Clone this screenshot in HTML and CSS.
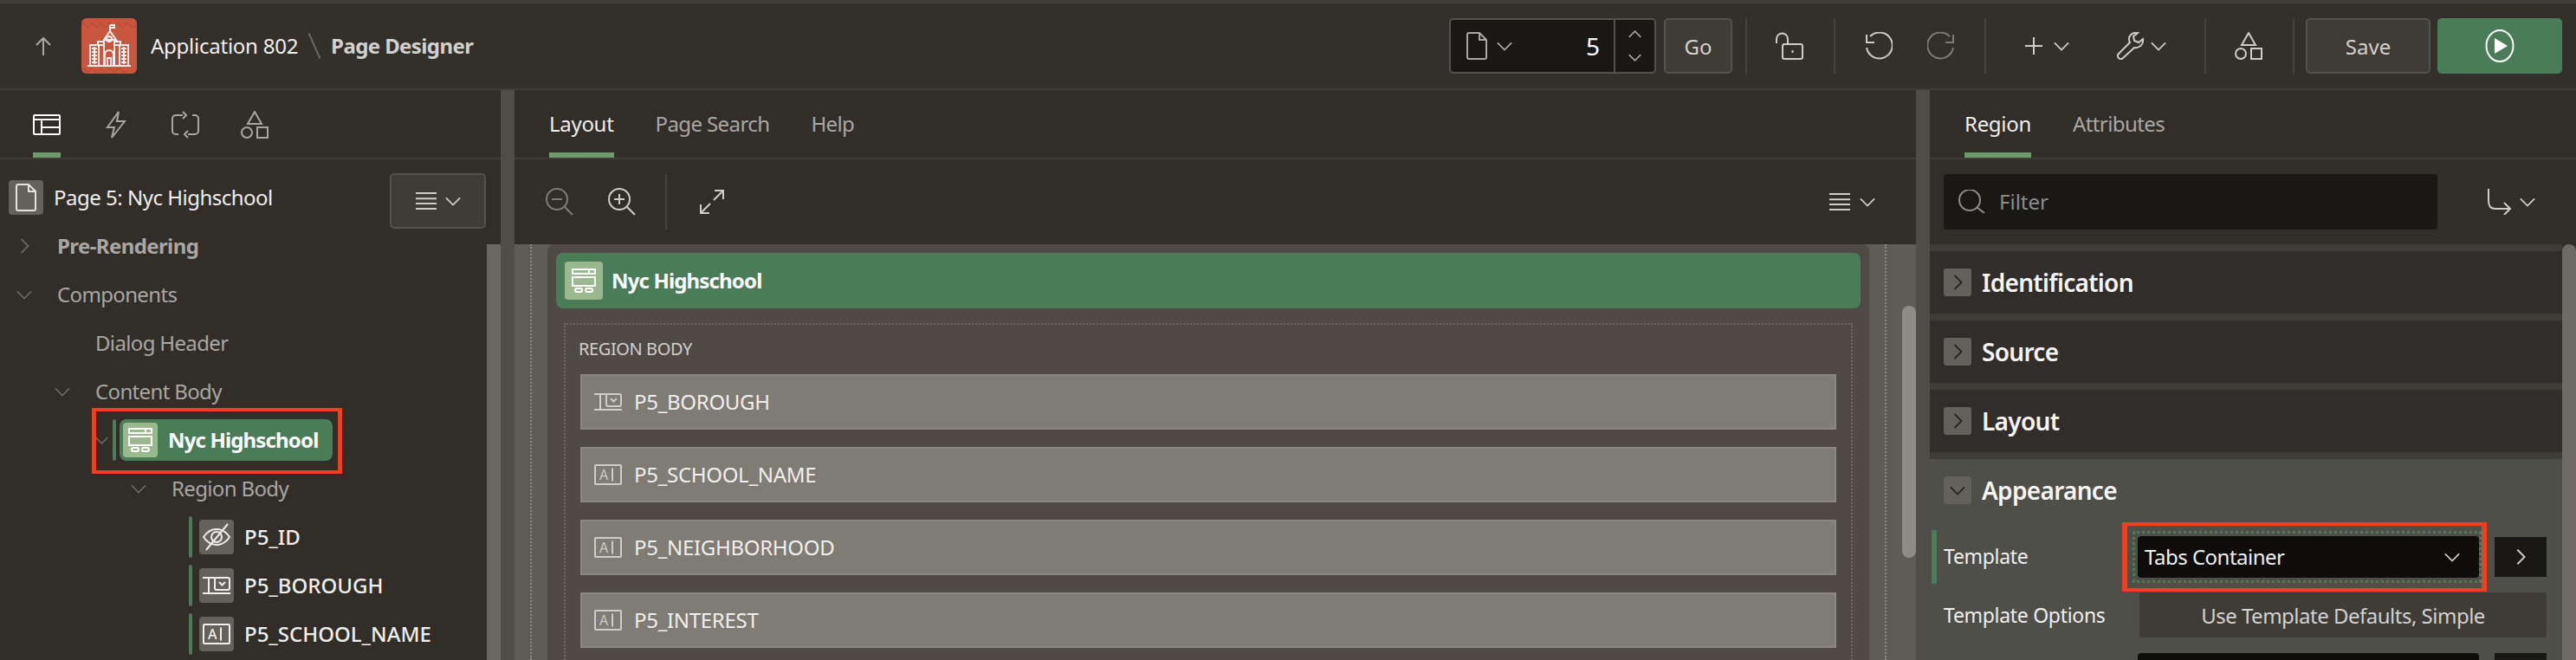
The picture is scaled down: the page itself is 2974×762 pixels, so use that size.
FILE: index.html
```html
<!DOCTYPE html>
<html lang="en">
<head>
    <meta charset="UTF-8">
    <meta name="viewport" content="width=device-width, initial-scale=1.0">
    <title>Page Designer</title>
    <link rel="stylesheet" href="styles.css">
</head>
<body>
    <svg class="sprite" xmlns="http://www.w3.org/2000/svg">
        <symbol id="i-down" viewBox="0 0 20 12"><polyline points="1,1.5 10,10.5 19,1.5"/></symbol>
        <symbol id="i-up" viewBox="0 0 20 12"><polyline points="1,10.5 10,1.5 19,10.5"/></symbol>
        <symbol id="i-right" viewBox="0 0 12 20"><polyline points="1.5,1 10.5,10 1.5,19"/></symbol>
        <symbol id="i-arrow-up" viewBox="0 0 18 22"><path d="M9 22V2M1 10l8-8 8 8"/></symbol>
        <symbol id="i-doc" viewBox="0 0 24 32"><path d="M1 3a2 2 0 0 1 2-2h12l8 8v20a2 2 0 0 1-2 2H3a2 2 0 0 1-2-2zM15 1v8h8"/></symbol>
        <symbol id="i-menu" viewBox="0 0 24 20"><path d="M0 1h24M0 7.300h24M0 13h24M0 19h24"/></symbol>
        <symbol id="i-lock" viewBox="0 0 32 32"><path d="M1 13V8a6.500 6.500 0 0 1 13 0v5"/><rect x="8" y="14" width="23" height="17" rx="2"/><path d="M19.500 21v3"/></symbol>
        <symbol id="i-undo" viewBox="0 0 32 32"><path d="M6 5a15 15 0 1 1-4 13"/><path d="M2 3v9h9"/></symbol>
        <symbol id="i-redo" viewBox="0 0 32 32"><path d="M26 5a15 15 0 1 0 4 13"/><path d="M30 3v9h-9"/></symbol>
        <symbol id="i-plus" viewBox="0 0 20 20"><path d="M10 0v20M0 10h20"/></symbol>
        <symbol id="i-wrench" viewBox="0 0 32 32"><path d="M30 8l-5 4-5-2-1-5 5-4c-5-1-10 2-10 7 0 2 0 3 1 4L2 25c-2 2-1 4 0 5s3 2 5 0l13-12c6 1 11-4 10-10z"/><path d="M5 27h.1"/></symbol>
        <symbol id="i-shapes" viewBox="0 0 32 32"><path d="M16 1l8 14H8z"/><circle cx="7" cy="25" r="6"/><rect x="19" y="19" width="12" height="12"/></symbol>
        <symbol id="i-play" viewBox="0 0 34 38"><ellipse cx="17" cy="19" rx="15.500" ry="18"/><path class="solid" d="M11 10l15 9-15 9z"/></symbol>
        <symbol id="i-tree" viewBox="0 0 32 24"><rect x="1" y="1" width="30" height="22" rx="1"/><path d="M1 6h30M10 6v17M10 15h21"/></symbol>
        <symbol id="i-bolt" viewBox="0 0 24 32"><path d="M15 1L2 19h8l-3 12 15-19h-9z"/></symbol>
        <symbol id="i-loop" viewBox="0 0 32 32"><path d="M13 5H5a4 4 0 0 0-4 4v14a4 4 0 0 0 4 4h3M13 1l4 4-4 4M19 27h8a4 4 0 0 0 4-4V9a4 4 0 0 0-4-4h-3M19 23l-4 4 4 4"/></symbol>
        <symbol id="i-region" viewBox="0 0 28 28"><rect x="1" y="1" width="26" height="5"/><path d="M20 1v5"/><rect x="1" y="10" width="26" height="10"/><rect x="4" y="23" width="8" height="4" rx="2"/><rect x="16" y="23" width="8" height="4" rx="2"/></symbol>
        <symbol id="i-hidden" viewBox="0 0 32 32"><path d="M1 16c4-6 9-9 15-9s11 3 15 9c-4 6-9 9-15 9S5 22 1 16z"/><circle cx="16" cy="16" r="6"/><path d="M4 31L29 1"/></symbol>
        <symbol id="i-select" viewBox="0 0 32 20"><path d="M0 1h14M0 19h32M7 1v18"/><rect x="14" y="1" width="17" height="14" rx="2"/><polyline points="19,6 22.500,9.500 26,6"/></symbol>
        <symbol id="i-zoom-out" viewBox="0 0 32 32"><circle cx="13" cy="13" r="12"/><path d="M22 22l9 9M7 13h12"/></symbol>
        <symbol id="i-zoom-in" viewBox="0 0 32 32"><circle cx="13" cy="13" r="12"/><path d="M22 22l9 9M7 13h12M13 7v12"/></symbol>
        <symbol id="i-expand" viewBox="0 0 28 28"><path d="M16 12L27 1M17 1h10v10M12 16L1 27M1 17v10h10"/></symbol>
        <symbol id="i-search" viewBox="0 0 32 28"><circle cx="14" cy="12" r="12"/><path d="M22 20l9 7"/></symbol>
        <symbol id="i-goto" viewBox="0 0 28 30"><path d="M1 0v14c0 6 3 9 8 9h17M19 16l7 7-7 7"/></symbol>
        <symbol id="i-school" viewBox="0 0 64 64">
            <path d="M7 55h50M10 55V31h16M54 55V31H38M19 31v-4h7M45 31v-4h-7"/>
            <path d="M20 55V31M44 55V31M26 55V25L33 15l7 10h-2v30M26 25h12"/>
            <path d="M33 15V8M33 8h5v3h-5"/>
            <circle cx="32" cy="24" r="3"/>
            <path d="M27 55V42a5 5 0 0 1 10 0v13M30 55v-9h4v9"/>
            <path d="M12 35h6M12 39h6M12 43h6M12 47h6M12 51h6M46 35h6M46 39h6M46 43h6M46 47h6M46 51h6M15 33v20M49 33v20"/>
        </symbol>
    </svg>

    <header class="topbar">
        <div class="crumbs">
            <svg class="ic ic-back"><use href="#i-arrow-up"/></svg>
            <div class="logo">
                <svg class="logo-waves" viewBox="0 0 64 64"><path d="M0 8c4-8 6 8 10 0s6 8 10 0 6 8 10 0 6 8 10 0 6 8 10 0 6 8 14 0M0 60c4-8 6 8 10 0s6 8 10 0 6 8 10 0 6 8 10 0 6 8 14 0"/></svg>
                <svg class="logo-school"><use href="#i-school"/></svg>
            </div>
            <span class="app-name">Application 802</span>
            <span class="crumb-sep"></span>
            <span class="page-name">Page Designer</span>
        </div>
        <div class="tools">
            <div class="page-picker">
                <svg class="ic ic-doc dim"><use href="#i-doc"/></svg>
                <svg class="ic chev dim"><use href="#i-down"/></svg>
                <span class="page-num">5</span>
                <div class="spin">
                    <svg class="ic chev dim"><use href="#i-up"/></svg>
                    <svg class="ic chev dim"><use href="#i-down"/></svg>
                </div>
            </div>
            <button class="btn btn-go">Go</button>
            <span class="vline vline-go"></span>
            <div class="tool-group tg-lock"><svg class="ic ic-32"><use href="#i-lock"/></svg></div>
            <span class="vline"></span>
            <div class="tool-group tg-undo">
                <svg class="ic ic-32"><use href="#i-undo"/></svg>
                <svg class="ic ic-32 off"><use href="#i-redo"/></svg>
            </div>
            <span class="vline"></span>
            <div class="tool-group tg-create">
                <div class="menu-btn"><svg class="ic ic-plus"><use href="#i-plus"/></svg><svg class="ic chev"><use href="#i-down"/></svg></div>
                <div class="menu-btn menu-btn-tight"><svg class="ic ic-32"><use href="#i-wrench"/></svg><svg class="ic chev"><use href="#i-down"/></svg></div>
            </div>
            <span class="vline"></span>
            <div class="tool-group tg-lock"><svg class="ic ic-32"><use href="#i-shapes"/></svg></div>
            <span class="vline"></span>
            <button class="btn btn-save">Save</button>
            <button class="btn btn-run"><svg class="ic ic-play"><use href="#i-play"/></svg></button>
        </div>
    </header>

    <main class="panels">
        <section class="panel panel-left">
            <div class="tabbar icon-tabs">
                <div class="icon-tab active"><svg class="ic ic-tree"><use href="#i-tree"/></svg></div>
                <div class="icon-tab"><svg class="ic ic-bolt"><use href="#i-bolt"/></svg></div>
                <div class="icon-tab"><svg class="ic ic-32"><use href="#i-loop"/></svg></div>
                <div class="icon-tab"><svg class="ic ic-32"><use href="#i-shapes"/></svg></div>
            </div>
            <div class="tree-wrap">
                <div class="tree">
                    <div class="row row-page">
                        <span class="node-icon"><svg class="ic ic-doc-sm"><use href="#i-doc"/></svg></span>
                        <span class="page-title txt">Page 5: Nyc Highschool</span>
                        <button class="btn btn-tree-menu">
                            <svg class="ic ic-menu"><use href="#i-menu"/></svg>
                            <svg class="ic chev"><use href="#i-down"/></svg>
                        </button>
                    </div>
                    <div class="row lvl-0"><svg class="ic tw tw-right"><use href="#i-right"/></svg><b class="strong-muted txt">Pre-Rendering</b></div>
                    <div class="row lvl-0"><svg class="ic tw"><use href="#i-down"/></svg><span class="muted txt">Components</span></div>
                    <div class="row lvl-1 no-tw"><span class="muted txt">Dialog Header</span></div>
                    <div class="row lvl-1"><svg class="ic tw"><use href="#i-down"/></svg><span class="muted txt">Content Body</span></div>
                    <div class="row row-selected">
                        <svg class="ic tw tw-small"><use href="#i-down"/></svg>
                        <span class="node-bar"></span>
                        <span class="pill">
                            <span class="node-icon node-icon-green"><svg class="ic ic-region"><use href="#i-region"/></svg></span>
                            <span class="txt">Nyc Highschool</span>
                        </span>
                        <span class="callout callout-tree"></span>
                    </div>
                    <div class="row lvl-2"><svg class="ic tw"><use href="#i-down"/></svg><span class="muted txt">Region Body</span></div>
                    <div class="row row-item">
                        <span class="node-bar"></span>
                        <span class="node-icon"><svg class="ic ic-item-32"><use href="#i-hidden"/></svg></span>
                        <span class="txt">P5_ID</span>
                    </div>
                    <div class="row row-item">
                        <span class="node-bar"></span>
                        <span class="node-icon"><svg class="ic ic-item"><use href="#i-select"/></svg></span>
                        <span class="txt">P5_BOROUGH</span>
                    </div>
                    <div class="row row-item">
                        <span class="node-bar"></span>
                        <span class="node-icon">
                            <svg class="ic ic-text" viewBox="0 0 32 24"><rect x="1" y="1" width="30" height="22" rx="1"/><text class="solid icon-letter" x="6" y="18" font-size="16">A</text><path d="M21 4.500v15"/></svg>
                        </span>
                        <span class="txt">P5_SCHOOL_NAME</span>
                    </div>
                </div>
                <div class="tree-scroll"><div class="tree-thumb"></div></div>
            </div>
        </section>

        <div class="splitter"></div>

        <section class="panel panel-center">
            <div class="tabbar text-tabs">
                <span class="tab active">Layout</span>
                <span class="tab">Page Search</span>
                <span class="tab">Help</span>
            </div>
            <div class="layout-tools">
                <svg class="ic ic-32 off"><use href="#i-zoom-out"/></svg>
                <svg class="ic ic-32 zoom-in"><use href="#i-zoom-in"/></svg>
                <span class="vline vline-zoom"></span>
                <svg class="ic ic-expand"><use href="#i-expand"/></svg>
                <div class="menu-btn layout-menu">
                    <svg class="ic ic-menu"><use href="#i-menu"/></svg>
                    <svg class="ic chev"><use href="#i-down"/></svg>
                </div>
            </div>
            <div class="canvas">
                <div class="gutter"><span class="gutter-line"></span></div>
                <div class="region">
                    <div class="region-head">
                        <span class="node-icon node-icon-head"><svg class="ic ic-region"><use href="#i-region"/></svg></span>
                        <span class="txt">Nyc Highschool</span>
                    </div>
                    <div class="region-body">
                        <div class="region-label"><span class="txt">REGION BODY</span></div>
                        <div class="field"><svg class="ic ic-field"><use href="#i-select"/></svg><span class="txt">P5_BOROUGH</span></div>
                        <div class="field">
                            <svg class="ic ic-field-text" viewBox="0 0 32 24"><rect x="1" y="1" width="30" height="22" rx="1"/><text class="solid icon-letter" x="6" y="18" font-size="16">A</text><path d="M21 4.500v15"/></svg>
                            <span class="txt">P5_SCHOOL_NAME</span>
                        </div>
                        <div class="field">
                            <svg class="ic ic-field-text" viewBox="0 0 32 24"><rect x="1" y="1" width="30" height="22" rx="1"/><text class="solid icon-letter" x="6" y="18" font-size="16">A</text><path d="M21 4.500v15"/></svg>
                            <span class="txt">P5_NEIGHBORHOOD</span>
                        </div>
                        <div class="field">
                            <svg class="ic ic-field-text" viewBox="0 0 32 24"><rect x="1" y="1" width="30" height="22" rx="1"/><text class="solid icon-letter" x="6" y="18" font-size="16">A</text><path d="M21 4.500v15"/></svg>
                            <span class="txt">P5_INTEREST</span>
                        </div>
                    </div>
                </div>
                <div class="gutter"><span class="gutter-line"></span></div>
                <div class="canvas-scroll"><div class="canvas-thumb"></div></div>
            </div>
        </section>

        <div class="splitter"></div>

        <section class="panel panel-right">
            <div class="tabbar text-tabs text-tabs-right">
                <span class="tab active">Region</span>
                <span class="tab">Attributes</span>
            </div>
            <div class="filter-bar">
                <div class="filter">
                    <svg class="ic ic-search"><use href="#i-search"/></svg>
                    <span class="txt">Filter</span>
                </div>
                <div class="menu-btn goto">
                    <svg class="ic ic-goto"><use href="#i-goto"/></svg>
                    <svg class="ic chev"><use href="#i-down"/></svg>
                </div>
            </div>
            <div class="props-wrap">
                <div class="props">
                    <div class="group"><span class="toggle"><svg class="ic tg-chev-r"><use href="#i-right"/></svg></span><h2>Identification</h2></div>
                    <div class="group"><span class="toggle"><svg class="ic tg-chev-r"><use href="#i-right"/></svg></span><h2>Source</h2></div>
                    <div class="group"><span class="toggle"><svg class="ic tg-chev-r"><use href="#i-right"/></svg></span><h2>Layout</h2></div>
                    <div class="group-open">
                        <div class="group group-bare"><span class="toggle"><svg class="ic tg-chev-d"><use href="#i-down"/></svg></span><h2>Appearance</h2></div>
                        <div class="prop prop-template">
                            <span class="prop-bar"></span>
                            <label class="txt">Template</label>
                            <div class="select">
                                <span class="txt">Tabs Container</span>
                                <svg class="ic chev"><use href="#i-down"/></svg>
                                <span class="dots"></span>
                                <span class="callout callout-select"></span>
                            </div>
                            <span class="go-btn"><svg class="ic go-chev"><use href="#i-right"/></svg></span>
                        </div>
                        <div class="prop prop-options">
                            <span class="prop-bar prop-bar-none"></span>
                            <label>Template Options</label>
                            <div class="options-btn">Use Template Defaults, Simple</div>
                        </div>
                        <div class="prop prop-next">
                            <span class="prop-bar prop-bar-none"></span>
                            <label></label>
                            <div class="select"></div>
                            <span class="go-btn"></span>
                        </div>
                    </div>
                </div>
                <div class="props-scroll"><div class="props-thumb"></div></div>
            </div>
        </section>
    </main>
</body>
</html>
```

FILE: styles.css
```css
* {
    box-sizing: border-box;
}
html, body {
    margin: 0;
    padding: 0;
    height: 100%;
    overflow: hidden;
}
body {
    width: 2974px;
    height: 762px;
    display: flex;
    flex-direction: column;
    background-color: #312e2a;
    color: #f1efed;
    font-family: "Noto Sans", "Open Sans", sans-serif;
    font-size: 24px;
}
.sprite {
    position: absolute;
    width: 0;
    height: 0;
}
symbol, .ic {
    fill: none;
    stroke: currentColor;
    stroke-width: 2;
}
.solid {
    fill: currentColor;
    stroke: none;
}
.icon-letter {
    font-family: "Noto Sans", sans-serif;
}
.txt {
    margin-bottom: 2px;
}
.ic {
    display: block;
    flex: none;
    color: #cfcdc9;
}
.ic-32 {
    width: 32px;
    height: 32px;
}
.off {
    color: #7f7c77;
}
.dim {
    color: #a9a7a3;
}
.chev {
    width: 18px;
    height: 11px;
    stroke-width: 2;
}
button {
    font-family: inherit;
}

/* top bar */
.topbar {
    height: 104px;
    flex: none;
    display: flex;
    align-items: center;
    justify-content: space-between;
    background-color: #33302c;
    border-top: 4px solid #413e3a;
    border-bottom: 2px solid #3f3c38;
}
.crumbs {
    display: flex;
    align-items: center;
}
.ic-back {
    width: 18px;
    height: 22px;
    margin-left: 41px;
    color: #a9a7a3;
}
.logo {
    position: relative;
    width: 64px;
    height: 64px;
    margin-left: 35px;
    border-radius: 6px;
    background-color: #c9573f;
    overflow: hidden;
}
.logo-waves {
    position: absolute;
    left: 0;
    top: 0;
    width: 64px;
    height: 64px;
    fill: none;
    stroke: #bb4c36;
    stroke-width: 1.500;
}
.logo-school {
    position: absolute;
    left: 0;
    top: 0;
    width: 64px;
    height: 64px;
    fill: none;
    stroke: #fff;
    stroke-width: 1.600;
}
.app-name {
    margin-left: 16px;
    margin-bottom: 2px;
    letter-spacing: -0.25px;
}
.crumb-sep {
    width: 2px;
    height: 32px;
    margin: 0 18px 0 18px;
    background-color: #6b6864;
    transform: rotate(-24deg);
}
.page-name {
    color: #d3d1ce;
    font-weight: 700;
    margin-bottom: 2px;
    letter-spacing: -0.6px;
}
.tools {
    display: flex;
    align-items: center;
    padding-right: 16px;
}
.page-picker {
    width: 239px;
    height: 64px;
    display: flex;
    align-items: center;
    background-color: #191816;
    border: 2px solid #55514c;
    border-radius: 5px;
}
.ic-doc {
    width: 24px;
    height: 32px;
    margin-left: 18px;
}
.page-picker .chev {
    margin-left: 11px;
}
.page-num {
    margin-left: auto;
    margin-right: 16px;
    font-size: 28px;
    color: #fff;
}
.spin {
    width: 47px;
    height: 100%;
    display: flex;
    flex-direction: column;
    align-items: center;
    justify-content: space-between;
    padding: 12px 0;
    border-left: 2px solid #55514c;
}
.spin .chev {
    margin: 0;
    width: 15px;
    height: 9px;
}
.btn {
    height: 64px;
    border: 2px solid #55514c;
    border-radius: 5px;
    background-color: #3f3c38;
    color: #d3d1ce;
    font-size: 24px;
    padding: 0;
}
.btn-go {
    width: 79px;
    margin-left: 9px;
}
.vline {
    width: 2px;
    height: 64px;
    flex: none;
    background-color: #45423d;
}
.vline-go {
    margin-left: 15px;
}
.tool-group {
    display: flex;
    align-items: center;
    justify-content: center;
}
.tg-lock {
    width: 100px;
}
.tg-lock .ic {
    margin-right: 3px;
}
.tg-undo {
    width: 172px;
    gap: 40px;
}
.tg-create {
    width: 252px;
    gap: 55px;
}
.menu-btn {
    display: flex;
    align-items: center;
    gap: 13px;
}
.menu-btn-tight {
    gap: 7px;
}
.ic-plus {
    width: 20px;
    height: 20px;
}
.btn-save {
    width: 144px;
    margin-left: 13px;
}
.btn-run {
    width: 144px;
    margin-left: 8px;
    background-color: #4a7d57;
    border: none;
    display: flex;
    align-items: center;
    justify-content: center;
}
.ic-play {
    width: 34px;
    height: 38px;
    color: #fff;
}

/* panels */
.panels {
    flex: 1;
    display: flex;
    min-height: 0;
}
.panel {
    display: flex;
    flex-direction: column;
    min-width: 0;
}
.panel-left {
    width: 578px;
}
.panel-center {
    width: 1618px;
}
.panel-right {
    width: 746px;
}
.splitter {
    width: 16px;
    flex: none;
    background-color: #504c47;
}
.tabbar {
    height: 80px;
    flex: none;
    display: flex;
    border-bottom: 2px solid #3f3c38;
}
.icon-tabs {
    padding-left: 38px;
    gap: 48px;
}
.icon-tab {
    width: 32px;
    padding-top: 24px;
    color: #a9a7a3;
}
.icon-tab .ic {
    color: #a9a7a3;
}
.icon-tab.active {
    border-bottom: 6px solid #6f9a6c;
}
.icon-tab.active .ic {
    color: #fff;
}
.ic-tree {
    width: 32px;
    height: 24px;
    margin-top: 4px;
}
.ic-bolt {
    width: 24px;
    height: 32px;
    margin-left: 4px;
}
.text-tabs {
    padding-left: 40px;
    gap: 48px;
}
.tab {
    height: 78px;
    padding-top: 22px;
    color: #a9a7a3;
    letter-spacing: -0.6px;
}
.tab.active {
    color: #f1efed;
    letter-spacing: -0.3px;
    border-bottom: 6px solid #6f9a6c;
}

/* tree */
.tree-wrap {
    flex: 1;
    display: flex;
    min-height: 0;
}
.tree {
    width: 562px;
    padding-top: 16px;
    overflow: hidden;
}
.tree-scroll {
    width: 16px;
    padding-top: 98px;
}
.tree-thumb {
    height: 100%;
    background-color: #6b6864;
}
.row {
    position: relative;
    height: 56px;
    display: flex;
    align-items: center;
    white-space: nowrap;
}
.muted {
    color: #a9a7a3;
    letter-spacing: -0.65px;
}
.strong-muted {
    color: #a9a7a3;
    font-weight: 700;
    letter-spacing: -0.6px;
}
.row-page {
    padding-left: 10px;
}
.page-title {
    margin-left: 12px;
    letter-spacing: -0.5px;
}
.node-icon {
    width: 40px;
    height: 40px;
    flex: none;
    display: flex;
    align-items: center;
    justify-content: center;
    background-color: #64605b;
    border-radius: 4px;
}
.ic-doc-sm {
    width: 24px;
    height: 32px;
    color: #e4e2df;
}
.btn-tree-menu {
    width: 111px;
    margin-left: auto;
    margin-right: 1px;
    align-self: flex-start;
    display: flex;
    align-items: center;
    justify-content: center;
    gap: 10px;
}
.ic-menu {
    width: 24px;
    height: 20px;
}
.tw {
    width: 18px;
    height: 11px;
    color: #6b6864;
    margin-right: 29px;
}
.tw-right {
    width: 11px;
    height: 18px;
    margin-left: 4px;
    margin-right: 32px;
}
.lvl-0 {
    padding-left: 19px;
}
.lvl-1 {
    padding-left: 63px;
}
.no-tw {
    padding-left: 110px;
}
.lvl-2 {
    padding-left: 151px;
}
.row-selected {
    padding-left: 110px;
}
.tw-small {
    width: 15px;
    height: 9px;
    margin-right: 5px;
}
.node-bar {
    width: 4px;
    height: 48px;
    flex: none;
    border-radius: 2px;
    background-color: #4f7a57;
}
.pill {
    width: 246px;
    height: 48px;
    margin-left: 4px;
    padding-left: 4px;
    display: flex;
    align-items: center;
    gap: 12px;
    background-color: #4a7d57;
    border-radius: 8px;
    font-weight: 700;
    color: #fff;
    letter-spacing: -0.85px;
}
.node-icon-green {
    background-color: #9bb98f;
}
.ic-region {
    width: 28px;
    height: 28px;
    color: #fff;
}
.callout {
    position: absolute;
    border-style: solid;
    border-color: #ee3f23;
}
.callout-tree {
    left: 106px;
    top: -9px;
    width: 289px;
    height: 76px;
    border-width: 4px 5px;
}
.row-item {
    padding-left: 218px;
    font-weight: 500;
    letter-spacing: 0;
}
.row-item .node-icon {
    margin: 0 12px 0 8px;
}
.ic-item-32 {
    width: 32px;
    height: 32px;
    color: #f1efed;
}
.ic-item {
    width: 32px;
    height: 20px;
    color: #f1efed;
}
.ic-text {
    width: 32px;
    height: 24px;
    color: #f1efed;
}

/* layout */
.layout-tools {
    height: 98px;
    flex: none;
    display: flex;
    align-items: center;
    padding-left: 36px;
}
.zoom-in {
    margin-left: 40px;
}
.vline-zoom {
    margin-left: 34px;
}
.ic-expand {
    width: 28px;
    height: 28px;
    margin-left: 38px;
}
.layout-menu {
    margin-left: auto;
    margin-right: 47px;
    gap: 11px;
}
.canvas {
    flex: 1;
    display: flex;
    min-height: 0;
    background-color: #5f5b56;
}
.gutter {
    width: 38px;
    flex: none;
    padding-left: 18px;
}
.gutter-line {
    display: block;
    height: 100%;
    border-left: 2px dotted #8d8a86;
}
.region {
    width: 1526px;
    flex: none;
    padding: 10px 10px 0;
    background-color: #4f4a46;
    border-radius: 8px 8px 0 0;
}
.region-head {
    height: 64px;
    display: flex;
    align-items: center;
    gap: 10px;
    padding-left: 10px;
    background-color: #4a7d57;
    border-radius: 8px;
    font-weight: 700;
    color: #fff;
    letter-spacing: -0.85px;
}
.node-icon-head {
    width: 44px;
    height: 44px;
    background-color: #9bb98f;
}
.region-body {
    margin: 17px 9px 0;
    padding: 0 17px;
    height: 400px;
    border: 2px dotted #6b6864;
    border-bottom: none;
}
.region-label {
    height: 57px;
    display: flex;
    align-items: center;
    margin-left: -2px;
    font-size: 20px;
    color: #d3d1ce;
    letter-spacing: -0.4px;
}
.field {
    height: 64px;
    margin-bottom: 20px;
    display: flex;
    align-items: center;
    gap: 14px;
    padding-left: 14px;
    background-color: #7f7b75;
    border: 2px solid #8a8680;
    color: #f1efed;
    letter-spacing: -0.3px;
}
.ic-field {
    width: 32px;
    height: 20px;
    color: #cfcdc9;
}
.ic-field-text {
    width: 32px;
    height: 24px;
    color: #cfcdc9;
}
.canvas-scroll {
    width: 16px;
    flex: none;
    padding-top: 71px;
}
.canvas-thumb {
    height: 291px;
    background-color: #8f8c88;
    border-radius: 8px;
}

/* property editor */
.filter-bar {
    height: 98px;
    flex: none;
    display: flex;
    align-items: center;
    padding-left: 16px;
}
.filter {
    width: 570px;
    height: 64px;
    display: flex;
    align-items: center;
    gap: 16px;
    padding-left: 16px;
    background-color: #191816;
    border-radius: 4px;
    color: #8f8c88;
}
.ic-search {
    width: 32px;
    height: 28px;
    color: #8f8c88;
}
.goto {
    margin-left: 58px;
    gap: 9px;
}
.ic-goto {
    width: 28px;
    height: 30px;
}
.props-wrap {
    flex: 1;
    display: flex;
    min-height: 0;
}
.props {
    width: 730px;
    padding-top: 8px;
    background-color: #3f3c38;
    overflow: hidden;
}
.props-scroll {
    width: 16px;
}
.props-thumb {
    height: 100%;
    background-color: #6e6b66;
    border-radius: 8px 8px 0 0;
}
.group {
    height: 72px;
    margin-bottom: 8px;
    display: flex;
    align-items: center;
    padding-left: 16px;
    background-color: #312d2a;
}
.group-bare {
    margin-bottom: 0;
    background-color: transparent;
}
.group-open {
    height: 232px;
    background-color: #4f4f49;
}
.toggle {
    width: 32px;
    height: 32px;
    flex: none;
    display: flex;
    align-items: center;
    justify-content: center;
    background-color: #64605b;
    border-radius: 3px;
}
.tg-chev-r {
    width: 11px;
    height: 18px;
    color: #25221f;
}
.tg-chev-d {
    width: 18px;
    height: 11px;
    color: #25221f;
}
h2 {
    margin: 0 0 0 12px;
    font-size: 28px;
    font-weight: 600;
    color: #f6f5f3;
    letter-spacing: -0.7px;
}
.prop {
    display: flex;
    align-items: center;
}
.prop-template {
    height: 62px;
    margin-top: 10px;
}
.prop-options {
    height: 52px;
    margin-top: 10px;
}
.prop-next {
    height: 46px;
    margin-top: 18px;
}
.prop-bar {
    width: 6px;
    height: 100%;
    flex: none;
    margin-left: 2px;
    background-color: #4a7d57;
}
.prop-bar-none {
    background-color: transparent;
}
.prop label {
    width: 224px;
    flex: none;
    margin-left: 8px;
    font-size: 23px;
    color: #f1efed;
    letter-spacing: -0.3px;
}
.select {
    position: relative;
    width: 394px;
    height: 48px;
    flex: none;
    display: flex;
    align-items: center;
    justify-content: space-between;
    padding: 0 22px 0 8px;
    background-color: #0e0d0b;
    border-radius: 4px;
    font-size: 24px;
    letter-spacing: -0.5px;
}
.prop-next .select,
.prop-next .go-btn {
    height: 46px;
}
.dots {
    position: absolute;
    left: -6px;
    top: -6px;
    right: -3px;
    bottom: -6px;
    border: 3px dotted #4a7d57;
}
.callout-select {
    left: -18px;
    top: -16px;
    right: -9px;
    bottom: -16px;
    border-width: 4px 6px;
}
.go-btn {
    width: 60px;
    height: 46px;
    flex: none;
    margin-left: 18px;
    display: flex;
    align-items: center;
    justify-content: center;
    background-color: #191816;
}
.go-chev {
    width: 11px;
    height: 20px;
    color: #d3d1ce;
}
.options-btn {
    width: 470px;
    height: 52px;
    flex: none;
    margin-left: 2px;
    display: flex;
    align-items: center;
    justify-content: center;
    background-color: #3f3c38;
    border-radius: 3px;
    font-size: 24px;
    color: #d3d1ce;
    letter-spacing: -0.5px;
}
```
